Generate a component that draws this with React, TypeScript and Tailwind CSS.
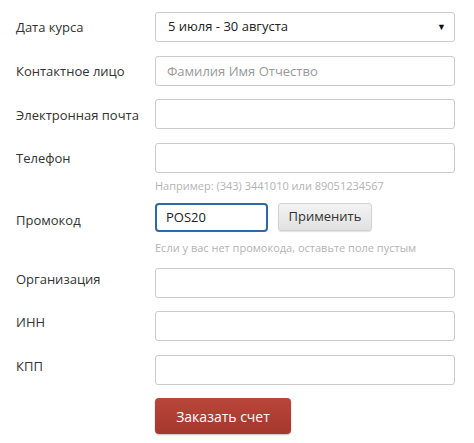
const font = { fontFamily: '"Open Sans", "Noto Sans", Arial, sans-serif' };

function Label({ children, lead = 'leading-[30px]' }: { children: React.ReactNode; lead?: string }) {
  return <div className={`h-[30px] w-[155px] shrink-0 pl-4 text-[13px] text-[#333] ${lead}`}>{children}</div>;
}

function TextInput({ placeholder }: { placeholder?: string }) {
  return (
    <input
      placeholder={placeholder}
      className="h-[30px] w-[300px] rounded-[3px] border border-[#ccc] bg-white px-[11px] text-[13px] text-[#333] outline-none placeholder:text-[#999]"
    />
  );
}

export default function App() {
  return (
    <div className="min-h-[443px] w-[474px] bg-white pt-3" style={font}>
      <div className="mb-[13.5px] flex">
        <Label>Дата курса</Label>
        <div className="relative flex h-[30px] w-[300px] items-center rounded-[3px] border border-[#ccc] bg-white pl-3 text-[13px] text-[#222]">
          5 июля - 30 августа
          <span className="absolute right-[8px] top-[9px] text-[9px] leading-none text-[#111]">▼</span>
        </div>
      </div>
      <div className="mb-[13.5px] flex">
        <Label>Контактное лицо</Label>
        <TextInput placeholder="Фамилия Имя Отчество" />
      </div>
      <div className="mb-[13.5px] flex">
        <Label lead="leading-[32px]">Электронная почта</Label>
        <TextInput />
      </div>
      <div className="flex">
        <Label>Телефон</Label>
        <div className="flex flex-col">
          <TextInput />
          <div className="mb-[9px] mt-[5px] text-[11px] leading-[16px] text-[#b3b3b3]">
            Например: (343) 3441010 или 89051234567
          </div>
        </div>
      </div>
      <div className="flex">
        <Label lead="leading-[34px]">Промокод</Label>
        <div className="flex flex-col">
          <div className="flex items-center gap-[10px]">
            <input
              defaultValue="POS20"
              className="h-[29px] w-[113px] rounded-[4px] border-2 border-[#2d69a6] bg-white px-[9px] text-[13px] text-[#222] outline-none"
            />
            <button
              type="button"
              className="h-[28px] w-[94px] rounded-[3px] border border-[#d2d2d2] bg-gradient-to-b from-[#f3f3f3] to-[#e1e1e1] text-[13px] text-[#333] shadow-[0_1px_1px_rgba(0,0,0,0.12)]"
            >
              Применить
            </button>
          </div>
          <div className="mb-[12px] mt-[8px] text-[11px] leading-[16px] text-[#b3b3b3]">
            Если у вас нет промокода, оставьте поле пустым
          </div>
        </div>
      </div>
      <div className="mb-[13.5px] flex">
        <Label lead="leading-[22px]">Организация</Label>
        <TextInput />
      </div>
      <div className="mb-[13.5px] flex">
        <Label lead="leading-[22px]">ИНН</Label>
        <TextInput />
      </div>
      <div className="mb-[13.5px] flex">
        <Label lead="leading-[22px]">КПП</Label>
        <TextInput />
      </div>
      <div className="flex">
        <div className="w-[155px] shrink-0" />
        <button
          type="button"
          className="h-[36px] w-[136px] rounded-[4px] bg-gradient-to-b from-[#b9463a] to-[#a5372c] text-[14px] text-white shadow-[0_1px_2px_rgba(0,0,0,0.25)]"
        >
          Заказать счет
        </button>
      </div>
    </div>
  );
}
